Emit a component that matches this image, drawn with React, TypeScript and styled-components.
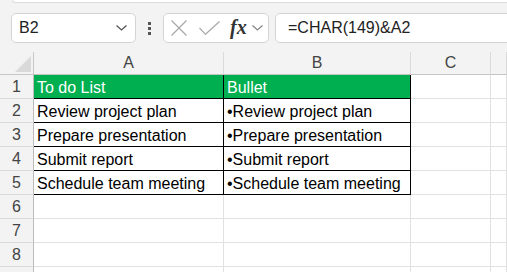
import React from "react";
import { styled, createGlobalStyle } from "styled-components";

const GlobalStyle = createGlobalStyle`
  body {
    margin: 0;
    background-color: #f3f3f3;
    font-family: "Liberation Sans", Arial, sans-serif;
    overflow: hidden;
  }
`;

const columns = ["A", "B", "C", ""];

const rows: string[][] = [
  ["To do List", "Bullet"],
  ["Review project plan", "\u2022Review project plan"],
  ["Prepare presentation", "\u2022Prepare presentation"],
  ["Submit report", "\u2022Submit report"],
  ["Schedule team meeting", "\u2022Schedule team meeting"],
  [],
  [],
  [],
  [],
];

// number of rows whose label fits in the window
const visibleLabels = 8;

const Chevron = () => (
  <svg width="11" height="6" viewBox="0 0 11 6">
    <polyline points="0.5,0.5 5.5,5 10.5,0.5" fill="none" stroke="#555" strokeWidth="1.3" />
  </svg>
);

const App = () => {
  return (
    <Page>
      <GlobalStyle />
      <TopStrip />
      <FormulaBar>
        <NameBox>
          <NameText>B2</NameText>
          <Chevron />
        </NameBox>
        <DotsArea>
          <Dot />
          <Dot />
          <Dot />
        </DotsArea>
        <ButtonsBox>
          <svg width="16" height="16" viewBox="0 0 16 16">
            <line x1="0.5" y1="0.5" x2="15.5" y2="15.5" stroke="#a8a8a8" strokeWidth="1.2" />
            <line x1="15.5" y1="0.5" x2="0.5" y2="15.5" stroke="#a8a8a8" strokeWidth="1.2" />
          </svg>
          <svg width="21" height="14" viewBox="0 0 21 14">
            <polyline points="0.5,7 6.5,13.3 20.5,0.5" fill="none" stroke="#a8a8a8" strokeWidth="1.2" />
          </svg>
          <FxText>fx</FxText>
          <SmallChevron>
            <Chevron />
          </SmallChevron>
        </ButtonsBox>
        <FormulaInput>=CHAR(149)&amp;A2</FormulaInput>
      </FormulaBar>
      <Sheet>
        <Corner>
          <Triangle />
        </Corner>
        {columns.map((c, i) => (
          <ColHeader key={c + i}>{c}</ColHeader>
        ))}
        {rows.map((r, ri) => {
          const inTable = ri < 5;
          const header = ri === 0;
          return (
            <React.Fragment key={ri}>
              <RowHeader>{ri < visibleLabels ? ri + 1 : ""}</RowHeader>
              {[0, 1, 2, 3].map((ci) => {
                const tableCell = inTable && ci < 2;
                return (
                  <Cell
                    key={ci}
                    $fill={header && tableCell ? "#00b050" : "#fff"}
                    $color={header ? "#fff" : "#000"}
                    $right={tableCell ? "#000" : "#e1e1e1"}
                    $bottom={tableCell ? "#000" : "#e1e1e1"}
                  >
                    {r[ci] ?? ""}
                  </Cell>
                );
              })}
            </React.Fragment>
          );
        })}
      </Sheet>
    </Page>
  );
};

const Page = styled.div`
  display: flex;
  flex-direction: column;
  width: 507px;
  height: 272px;
  overflow: hidden;

  & > * {
    flex-shrink: 0;
  }
`;

const TopStrip = styled.div`
  height: 2px;
  margin-left: 12px;
  background-color: #fff;
  border-bottom: 1px solid #dcdcdc;
  border-left: 1px solid #dcdcdc;
  border-bottom-left-radius: 6px;
`;

const FormulaBar = styled.div`
  display: flex;
  align-items: stretch;
  height: 30px;
  margin-top: 10px;
  padding-left: 11px;
`;

const BarBox = styled.div`
  box-sizing: border-box;
  background-color: #fff;
  border: 1px solid #d4d4d4;
  border-radius: 5px;
  display: flex;
  align-items: center;
`;

const NameBox = styled(BarBox)`
  width: 125px;
  padding: 0 8px 0 7px;
  justify-content: space-between;
`;

const NameText = styled.span`
  font-size: 16px;
  color: #222;
`;

const DotsArea = styled.div`
  width: 27px;
  display: flex;
  flex-direction: column;
  align-items: center;
  justify-content: center;
  gap: 2px;
`;

const Dot = styled.div`
  width: 3px;
  height: 3px;
  background-color: #555;
`;

const ButtonsBox = styled(BarBox)`
  width: 106px;
  padding-left: 7px;
  gap: 12px;
`;

const FxText = styled.span`
  font-family: "Liberation Serif", "Times New Roman", serif;
  font-style: italic;
  font-weight: bold;
  font-size: 20px;
  color: #333;
  margin-left: -2px;
  margin-top: -2px;
`;

const SmallChevron = styled.span`
  display: flex;
  margin-left: -7px;
  opacity: 0.7;
`;

const FormulaInput = styled(BarBox)`
  flex: 1;
  margin-left: 6px;
  margin-right: -10px;
  padding-left: 12px;
  font-size: 16px;
  color: #222;
`;

const Sheet = styled.div`
  display: grid;
  grid-template-columns: 34px 190px 187px 80px 1fr;
  grid-template-rows: 23px;
  grid-auto-rows: 24px;
  margin-top: 9px;
`;

const HeaderBase = styled.div`
  box-sizing: border-box;
  background-color: #f3f3f3;
  display: flex;
  align-items: center;
  justify-content: center;
  font-size: 16px;
  color: #444;
`;

const Corner = styled(HeaderBase)`
  position: relative;
  border-right: 1px solid #c8c8c8;
  border-bottom: 1px solid #c8c8c8;
`;

const Triangle = styled.div`
  position: absolute;
  right: 2px;
  bottom: 2px;
  width: 0;
  height: 0;
  border-left: 16px solid transparent;
  border-bottom: 16px solid #d9d9d9;
`;

const ColHeader = styled(HeaderBase)`
  border-right: 1px solid #dadada;
  border-bottom: 1px solid #c4c4c4;
`;

const RowHeader = styled(HeaderBase)`
  border-right: 1px solid #bcbcbc;
  border-bottom: 1px solid #dadada;
`;

const Cell = styled.div<{ $fill: string; $color: string; $right: string; $bottom: string }>`
  box-sizing: border-box;
  display: flex;
  align-items: flex-end;
  padding: 0 3px 1px 3px;
  line-height: 18px;
  font-size: 16px;
  white-space: nowrap;
  overflow: hidden;
  background-color: ${(p) => p.$fill};
  color: ${(p) => p.$color};
  border-right: 1px solid ${(p) => p.$right};
  border-bottom: 1px solid ${(p) => p.$bottom};
`;

export default App;
